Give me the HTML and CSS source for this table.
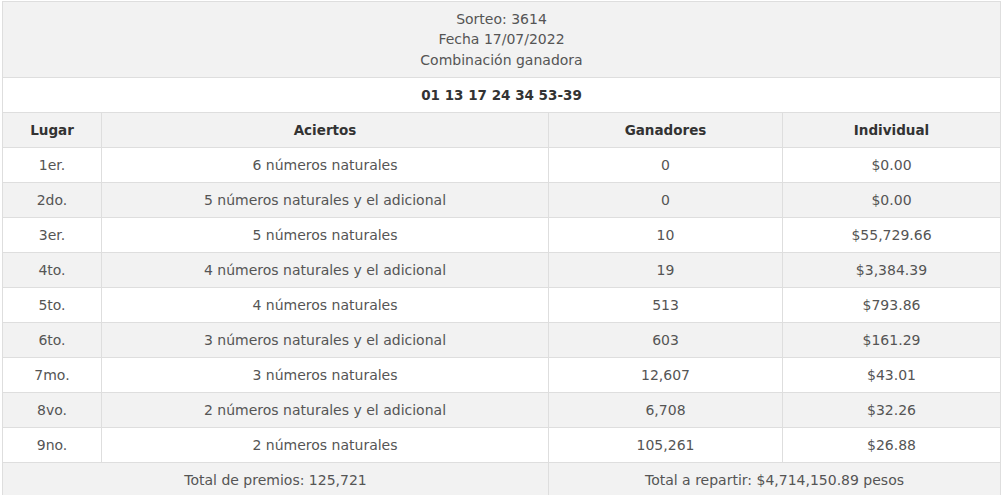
FILE: index.html
```html
<!DOCTYPE html>
<html lang="es">
<head>
<meta charset="utf-8">
<title>Sorteo 3614</title>
<link rel="stylesheet" href="styles.css">
</head>
<body>
<div class="results">
  <div class="cell span-all info">
    <div>Sorteo: 3614</div>
    <div>Fecha 17/07/2022</div>
    <div>Combinación ganadora</div>
  </div>
  <div class="cell span-all combo">01 13 17 24 34 53-39</div>

  <div class="cell head">Lugar</div>
  <div class="cell head">Aciertos</div>
  <div class="cell head">Ganadores</div>
  <div class="cell head">Individual</div>

  <div class="cell">1er.</div><div class="cell">6 números naturales</div><div class="cell">0</div><div class="cell">$0.00</div>
  <div class="cell alt">2do.</div><div class="cell alt">5 números naturales y el adicional</div><div class="cell alt">0</div><div class="cell alt">$0.00</div>
  <div class="cell">3er.</div><div class="cell">5 números naturales</div><div class="cell">10</div><div class="cell">$55,729.66</div>
  <div class="cell alt">4to.</div><div class="cell alt">4 números naturales y el adicional</div><div class="cell alt">19</div><div class="cell alt">$3,384.39</div>
  <div class="cell">5to.</div><div class="cell">4 números naturales</div><div class="cell">513</div><div class="cell">$793.86</div>
  <div class="cell alt">6to.</div><div class="cell alt">3 números naturales y el adicional</div><div class="cell alt">603</div><div class="cell alt">$161.29</div>
  <div class="cell">7mo.</div><div class="cell">3 números naturales</div><div class="cell">12,607</div><div class="cell">$43.01</div>
  <div class="cell alt">8vo.</div><div class="cell alt">2 números naturales y el adicional</div><div class="cell alt">6,708</div><div class="cell alt">$32.26</div>
  <div class="cell">9no.</div><div class="cell">2 números naturales</div><div class="cell">105,261</div><div class="cell">$26.88</div>

  <div class="cell alt span-2">Total de premios: 125,721</div>
  <div class="cell alt span-2">Total a repartir: $4,714,150.89 pesos</div>
</div>
</body>
</html>
```

FILE: styles.css
```css
html, body {
  margin: 0;
  padding: 0;
  background: #ffffff;
}

body {
  padding: 1px 2px 0 2px;
  font-family: "DejaVu Sans", "Liberation Sans", sans-serif;
  font-size: 14px;
  color: #555555;
}

.results {
  display: grid;
  grid-template-columns: 98px 446px 233px 217px;
  grid-template-rows: 75px;
  grid-auto-rows: 34px;
  gap: 1px;
  padding: 1px;
  background: #dedede;
  width: 999px;
  box-sizing: border-box;
}

.cell {
  background: #ffffff;
  display: flex;
  align-items: center;
  justify-content: center;
  text-align: center;
}

.alt {
  background: #f2f2f2;
}

.span-all {
  grid-column: 1 / -1;
}

.span-2 {
  grid-column: span 2;
}

.info {
  background: #f2f2f2;
  flex-direction: column;
  line-height: 20.5px;
}

.head {
  background: #f2f2f2;
  font-weight: bold;
  font-size: 13.5px;
  color: #333333;
}

.combo {
  font-weight: bold;
  font-size: 13.5px;
  color: #333333;
}
```
